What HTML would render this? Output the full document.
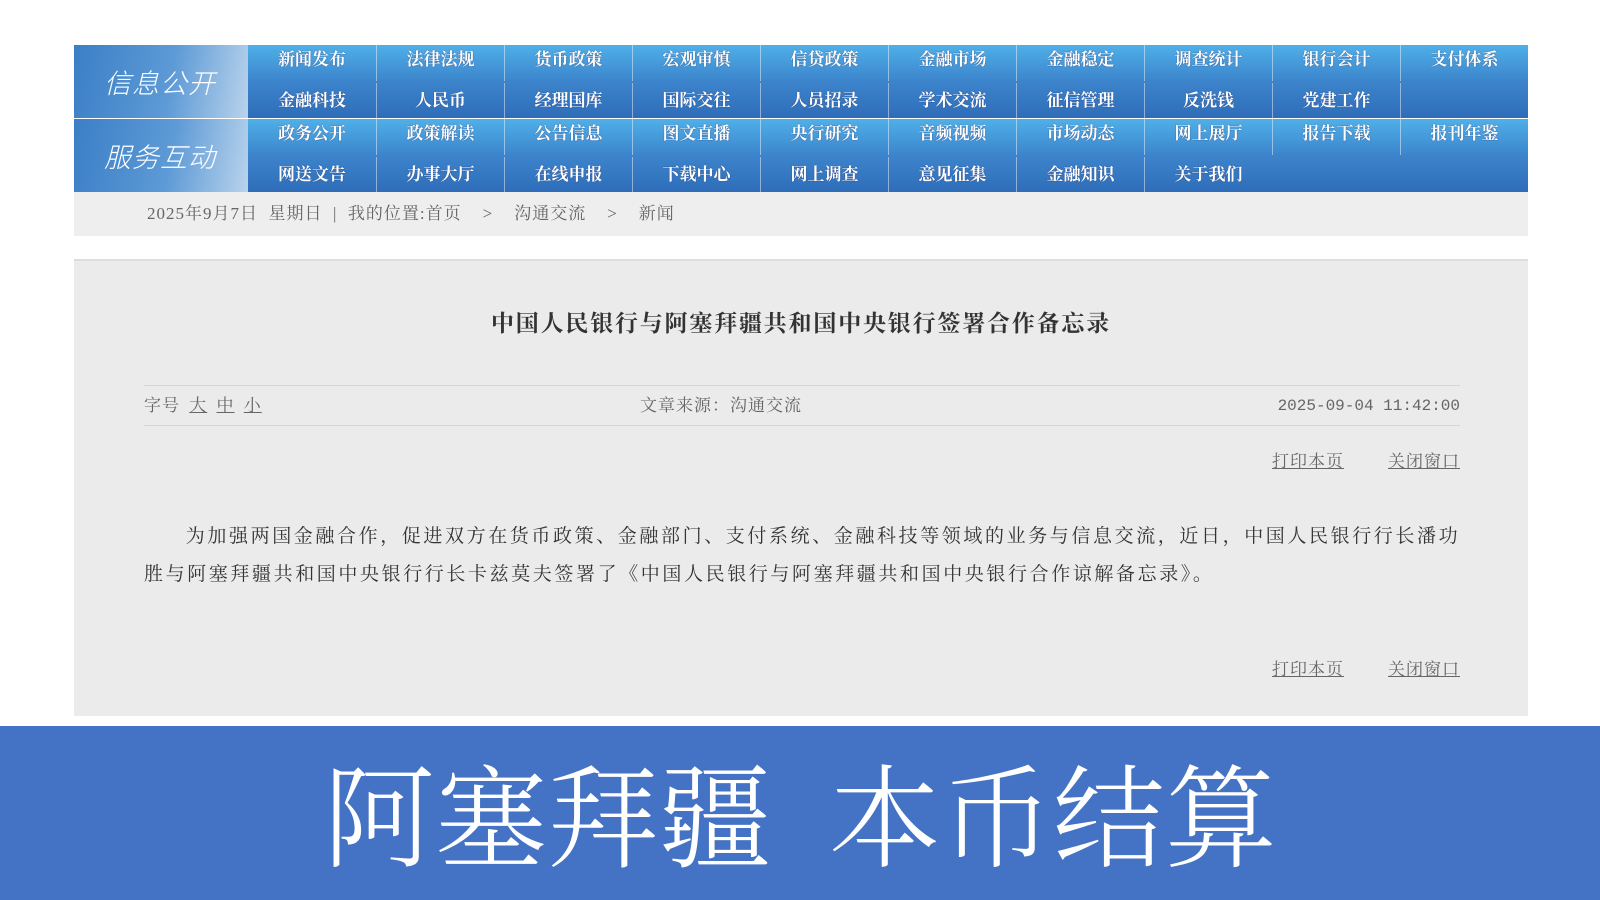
<!DOCTYPE html>
<html><head><meta charset="utf-8">
<style>
*{margin:0;padding:0;box-sizing:border-box}
body{width:1600px;height:900px;background:#fff;position:relative;overflow:hidden;font-family:"Liberation Serif","Noto Serif CJK SC",serif;color:#555}
.nav{position:absolute;left:74px;width:1454px;height:73px}
.row1{top:45px}.row2{top:119px}
.lab{position:absolute;left:0;top:0;width:174px;height:73px;background:linear-gradient(100deg,#3b7fc6 0%,#5d9ad6 55%,#b9d3ec 100%);color:#fff;font-style:italic;font-size:27px;line-height:73px;padding-left:30px;font-family:"Noto Sans CJK SC",sans-serif;font-weight:300;letter-spacing:1px}
.items{position:absolute;left:174px;top:0;width:1280px;height:73px;background:linear-gradient(#4fb0e8,#3c84cc 50%,#2f6db9)}
.it{position:absolute;width:128px;height:36px;line-height:26px;text-align:center;color:#fff;font-weight:bold;font-size:17px;font-family:"Noto Serif CJK SC",serif;text-shadow:0 0 1px #336}
.it.b{top:38px;line-height:32px}
.it.sep{border-left:1px solid rgba(255,255,255,.45)}
.bc{position:absolute;left:74px;top:192px;width:1454px;height:44px;background:#eeeeee;font-size:17px;line-height:44px;padding-left:73px;color:#666;letter-spacing:1px}
.box{position:absolute;left:74px;top:259px;width:1454px;height:457px;background:#ebebeb;border-top:2px solid #ddd}
.title{position:absolute;top:44px;width:100%;text-align:center;font-size:23px;letter-spacing:1.8px;color:#333;font-weight:bold;font-family:"Noto Serif CJK SC",serif}
.meta{position:absolute;left:70px;width:1316px;top:124px;height:41px;border-top:1px solid #d4d4d4;border-bottom:1px solid #d4d4d4;font-size:17px;line-height:40px;color:#666;letter-spacing:1px}
.meta u{margin-left:4px}
.links{position:absolute;right:68px;font-size:17px;color:#666;letter-spacing:1px}
.links u{margin-left:44px}
.p{position:absolute;left:70px;width:1320px;top:257px;font-size:19px;letter-spacing:2.6px;line-height:38px;color:#333;text-indent:2.2em}
.ban{position:absolute;left:0;top:726px;width:1600px;height:174px;color:#fff;text-align:center;font-size:112px;line-height:170px;font-family:"Noto Serif CJK SC",serif;font-weight:300;letter-spacing:0px}
.banbg{position:absolute;left:0;top:726px;width:1600px;height:174px;background:#4472c4}
</style></head><body>
<div class="nav row1"><div class="lab">信息公开</div><div class="items">
<div class="it" style="left:0">新闻发布</div><div class="it sep" style="left:128px">法律法规</div><div class="it sep" style="left:256px">货币政策</div><div class="it sep" style="left:384px">宏观审慎</div><div class="it sep" style="left:512px">信贷政策</div><div class="it sep" style="left:640px">金融市场</div><div class="it sep" style="left:768px">金融稳定</div><div class="it sep" style="left:896px">调查统计</div><div class="it sep" style="left:1024px">银行会计</div><div class="it sep" style="left:1152px">支付体系</div>
<div class="it b" style="left:0">金融科技</div><div class="it b sep" style="left:128px">人民币</div><div class="it b sep" style="left:256px">经理国库</div><div class="it b sep" style="left:384px">国际交往</div><div class="it b sep" style="left:512px">人员招录</div><div class="it b sep" style="left:640px">学术交流</div><div class="it b sep" style="left:768px">征信管理</div><div class="it b sep" style="left:896px">反洗钱</div><div class="it b sep" style="left:1024px">党建工作</div><div class="it b sep" style="left:1152px"></div>
</div></div>
<div class="nav row2"><div class="lab">服务互动</div><div class="items">
<div class="it" style="left:0">政务公开</div><div class="it sep" style="left:128px">政策解读</div><div class="it sep" style="left:256px">公告信息</div><div class="it sep" style="left:384px">图文直播</div><div class="it sep" style="left:512px">央行研究</div><div class="it sep" style="left:640px">音频视频</div><div class="it sep" style="left:768px">市场动态</div><div class="it sep" style="left:896px">网上展厅</div><div class="it sep" style="left:1024px">报告下载</div><div class="it sep" style="left:1152px">报刊年鉴</div>
<div class="it b" style="left:0">网送文告</div><div class="it b sep" style="left:128px">办事大厅</div><div class="it b sep" style="left:256px">在线申报</div><div class="it b sep" style="left:384px">下载中心</div><div class="it b sep" style="left:512px">网上调查</div><div class="it b sep" style="left:640px">意见征集</div><div class="it b sep" style="left:768px">金融知识</div><div class="it b sep" style="left:896px">关于我们</div>
</div></div>
<div class="bc">2025年9月7日&nbsp; 星期日 &nbsp;|&nbsp; 我的位置:首页 &nbsp;&nbsp; &gt; &nbsp;&nbsp; 沟通交流 &nbsp;&nbsp; &gt; &nbsp;&nbsp; 新闻</div>
<div class="box">
<div class="title">中国人民银行与阿塞拜疆共和国中央银行签署合作备忘录</div>
<div class="meta">字号 <u>大</u> <u>中</u> <u>小</u><span style="position:absolute;left:496px">文章来源：沟通交流</span><span style="position:absolute;right:0;font-family:'Liberation Mono',monospace;font-size:16px;letter-spacing:0">2025-09-04 11:42:00</span></div>
<div class="links" style="top:186px"><u>打印本页</u><u>关闭窗口</u></div>
<div class="p">为加强两国金融合作，促进双方在货币政策、金融部门、支付系统、金融科技等领域的业务与信息交流，近日，中国人民银行行长潘功胜与阿塞拜疆共和国中央银行行长卡兹莫夫签署了《中国人民银行与阿塞拜疆共和国中央银行合作谅解备忘录》。</div>
<div class="links" style="top:394px"><u>打印本页</u><u>关闭窗口</u></div>
</div>
<div class="banbg"></div>
<div class="ban">阿塞拜疆&nbsp; 本币结算</div>
</body></html>
